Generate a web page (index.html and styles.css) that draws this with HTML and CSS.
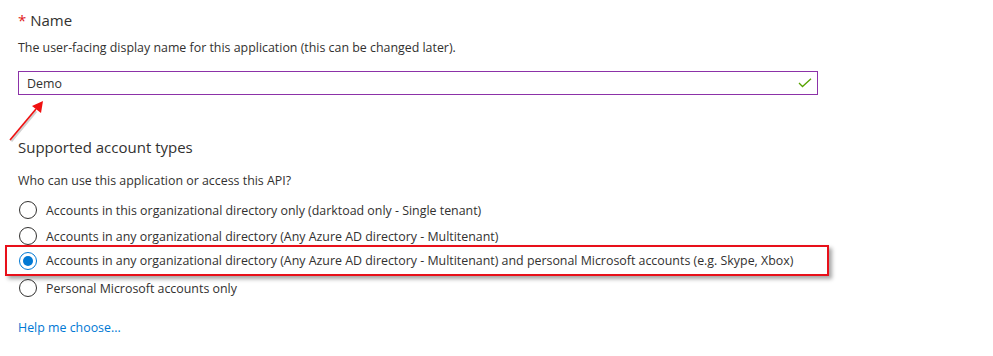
FILE: index.html
```html
<!DOCTYPE html>
<html lang="en">
<head>
    <meta charset="UTF-8">
    <title>Register an application</title>
    <link rel="stylesheet" href="styles.css">
</head>
<body>
    <div class="page">
        <div class="field">
            <label class="field-label" for="app-name"><span class="required">*</span> Name</label>
            <p class="hint">The user-facing display name for this application (this can be changed later).</p>
            <div class="input-wrap">
                <input type="text" id="app-name" class="text-input" value="Demo">
                <svg class="valid-icon" width="14" height="10" viewBox="0 0 14 10">
                    <path d="M1 5 L4.5 8.5 L13 0.8" fill="none" stroke="#57a300" stroke-width="1.3"/>
                </svg>
            </div>
        </div>

        <div class="accounts">
            <h2 class="section-title">Supported account types</h2>
            <p class="question">Who can use this application or access this API?</p>
            <div class="options">
                <label class="option"><span class="radio"></span>Accounts in this organizational directory only (darktoad only - Single tenant)</label>
                <label class="option"><span class="radio"></span>Accounts in any organizational directory (Any Azure AD directory - Multitenant)</label>
                <label class="option option-highlight"><span class="radio checked"></span>Accounts in any organizational directory (Any Azure AD directory - Multitenant) and personal Microsoft accounts (e.g. Skype, Xbox)</label>
                <label class="option"><span class="radio"></span>Personal Microsoft accounts only</label>
            </div>
            <a class="help-link" href="#">Help me choose...</a>
        </div>

        <!-- callout arrow pointing at the name box -->
        <svg class="callout-arrow" width="60" height="60" viewBox="0 0 60 60">
            <line x1="11" y1="41" x2="36" y2="11" stroke="rgba(0,0,0,0.18)" stroke-width="3"/>
            <line x1="10" y1="40" x2="36" y2="9" stroke="#f01010" stroke-width="1.6"/>
            <polygon points="43,1 41,13 32,6" fill="#f01010"/>
        </svg>
    </div>
</body>
</html>
```

FILE: styles.css
```css
* {
    margin: 0;
    padding: 0;
    box-sizing: border-box;
}

body {
    font-family: 'Open Sans', 'Noto Sans', sans-serif;
    font-size: 12.4px;
    color: #323130;
    background: white;
}

.page {
    position: relative;
    padding: 8px 0 0 18px;
}

.field-label {
    display: block;
    font-size: 15px;
    line-height: 24px;
}

.required {
    color: #e01a1a;
}

.hint {
    margin-top: 6px;
    line-height: 20px;
}

.input-wrap {
    position: relative;
    width: 800px;
    margin-top: 13px;
}

.text-input {
    width: 100%;
    height: 24px;
    border: 1px solid #8c32a8;
    padding: 0 8px;
    font-family: inherit;
    font-size: 12.4px;
    color: #323130;
    outline: none;
}

.valid-icon {
    position: absolute;
    right: 6px;
    top: 7px;
}

.section-title {
    margin-top: 40px;
    font-size: 15px;
    font-weight: normal;
    line-height: 24px;
}

.question {
    margin-top: 12px;
    line-height: 20px;
}

.options {
    margin-top: 6px;
}

.option {
    display: flex;
    align-items: center;
    height: 26px;
    white-space: nowrap;
}

.option-highlight {
    width: 824px;
    height: 31px;
    margin: -4px 0 -1px -13px;
    padding-left: 11px;
    border: 2px solid #e8101a;
    box-shadow: 3px 3px 4px rgba(0, 0, 0, 0.35);
}

.radio {
    width: 18px;
    height: 18px;
    margin: 0 9px 0 1px;
    border: 1px solid #323130;
    border-radius: 50%;
    position: relative;
    flex: none;
}

.radio.checked {
    border-color: #0078d4;
}

.radio.checked::after {
    content: "";
    position: absolute;
    left: 3px;
    top: 3px;
    width: 10px;
    height: 10px;
    border-radius: 50%;
    background: #0078d4;
}

.help-link {
    display: inline-block;
    margin-top: 17px;
    line-height: 20px;
    color: #0078d4;
    text-decoration: none;
}

.callout-arrow {
    position: absolute;
    left: 0;
    top: 100px;
}
```
